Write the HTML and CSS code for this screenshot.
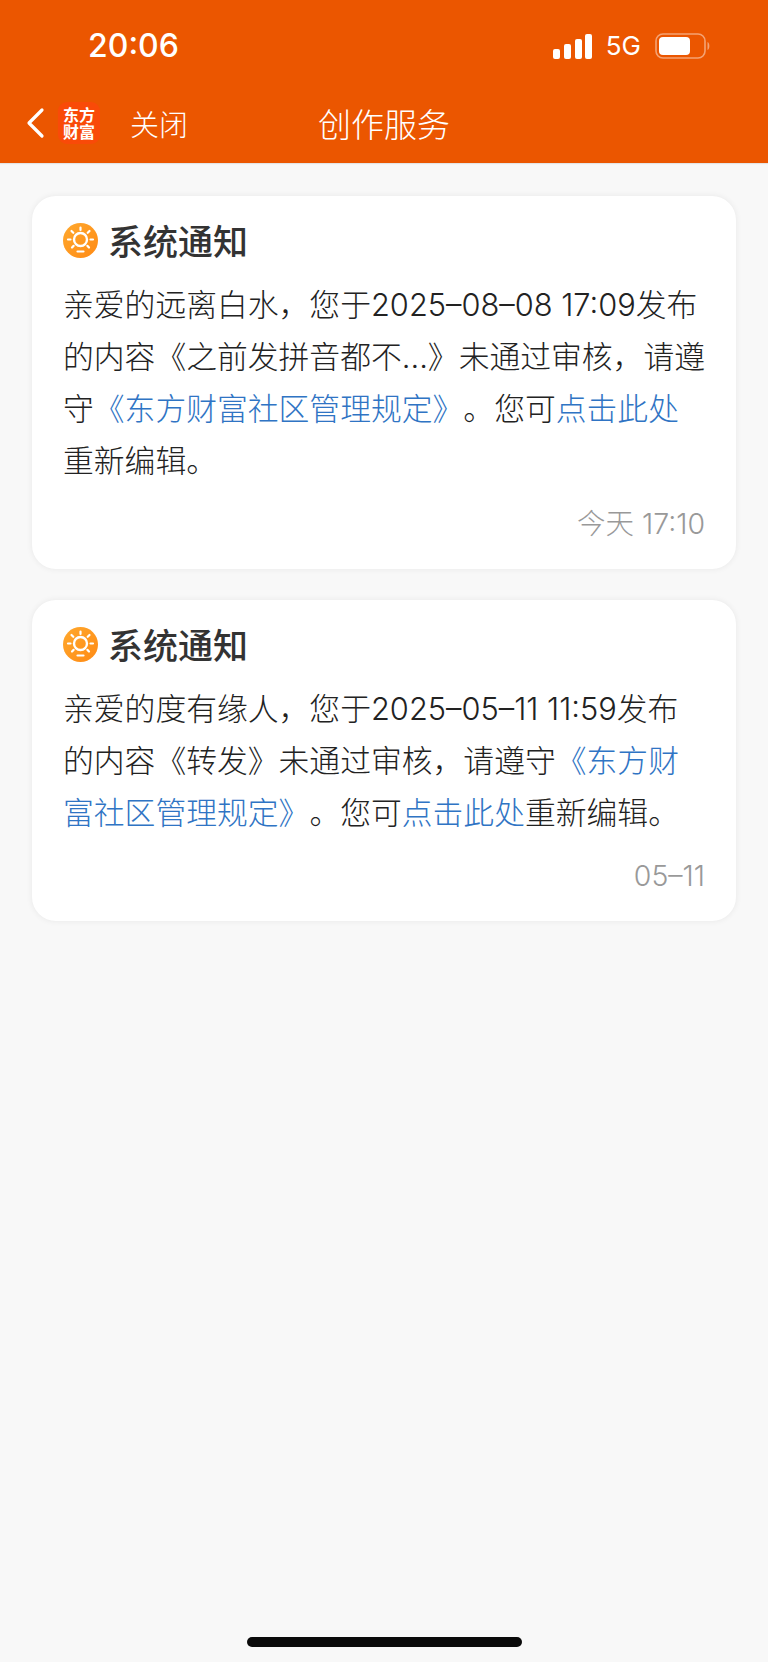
FILE: index.html
```html
<!DOCTYPE html>
<html lang="zh">
<head>
<meta charset="utf-8">
<title>创作服务</title>
<link rel="stylesheet" href="styles.css">
</head>
<body>
<header class="top">
  <div class="status">
    <span class="time">20:06</span>
    <div class="status-right">
      <svg class="signal" width="39" height="25" viewBox="0 0 39 25"><rect x="0" y="15" width="7" height="10" rx="2"/><rect x="11" y="10" width="7" height="15" rx="2"/><rect x="22" y="5" width="7" height="20" rx="2"/><rect x="32" y="0" width="7" height="25" rx="2"/></svg>
      <span class="net">5G</span>
      <svg class="battery" width="56" height="26" viewBox="0 0 56 26"><rect x="1" y="1" width="49" height="24" rx="7" fill="none" stroke="#fff" stroke-opacity=".45" stroke-width="1.6"/><rect x="4" y="4" width="31" height="18" rx="4" fill="#fff"/><path d="M52.500 9 C55 10 55 16 52.500 17 Z" fill="#fff" fill-opacity=".45"/></svg>
    </div>
  </div>
  <nav class="nav">
    <svg class="back" width="20" height="32" viewBox="0 0 20 32"><path d="M17 3 L4 16 L17 29" fill="none" stroke="#fff" stroke-width="3.200" stroke-linecap="round" stroke-linejoin="round"/></svg>
    <div class="logo"><span>东方</span><span>财富</span></div>
    <span class="close">关闭</span>
    <h1 class="title">创作服务</h1>
  </nav>
</header>
<main class="list">
  <article class="card">
    <h2 class="head">
      <svg class="sun" width="35" height="35" viewBox="0 0 35 35"><defs><linearGradient id="g1" x1="0" y1="0" x2="1" y2="1"><stop offset="0" stop-color="#ffa92e"/><stop offset="1" stop-color="#ff8a14"/></linearGradient></defs><circle cx="17.500" cy="17.500" r="17.500" fill="url(#g1)"/><circle cx="17.500" cy="16.500" r="6.500" fill="none" stroke="#fff" stroke-width="2.400"/><path d="M17.500 4.500v2.500M8.500 8l1.800 1.800M26.500 8l-1.800 1.800M5 16.500h2.500M27.500 16.500H30M9 24.500l1.600-1.600M26 24.500l-1.600-1.600M14.500 28.500h6" stroke="#fff" stroke-width="2.200" stroke-linecap="round" fill="none"/></svg>
      <span>系统通知</span>
    </h2>
    <p class="body">亲爱的远离白水，您于2025–08–08 17:09发布的内容《之前发拼音都不...》未通过审核，请遵守<a class="link">《东方财富社区管理规定》</a>。您可<a class="link">点击此处</a>重新编辑。</p>
    <div class="date">今天 17:10</div>
  </article>
  <article class="card">
    <h2 class="head">
      <svg class="sun" width="35" height="35" viewBox="0 0 35 35"><circle cx="17.500" cy="17.500" r="17.500" fill="url(#g1)"/><circle cx="17.500" cy="16.500" r="6.500" fill="none" stroke="#fff" stroke-width="2.400"/><path d="M17.500 4.500v2.500M8.500 8l1.800 1.800M26.500 8l-1.800 1.800M5 16.500h2.500M27.500 16.500H30M9 24.500l1.600-1.600M26 24.500l-1.600-1.600M14.500 28.500h6" stroke="#fff" stroke-width="2.200" stroke-linecap="round" fill="none"/></svg>
      <span>系统通知</span>
    </h2>
    <p class="body">亲爱的度有缘人，您于2025–05–11 11:59发布的内容《转发》未通过审核，请遵守<a class="link">《东方财富社区管理规定》</a>。您可<a class="link">点击此处</a>重新编辑。</p>
    <div class="date">05–11</div>
  </article>
</main>
<div class="home"></div>
</body>
</html>
```
FILE: styles.css
```css
* { box-sizing: border-box; }
html, body { margin: 0; padding: 0; }
body {
  width: 768px;
  height: 1662px;
  background: #f8f8f8;
  font-family: "Noto Sans CJK SC", "Liberation Sans", sans-serif;
  position: relative;
  overflow: hidden;
  text-spacing-trim: space-all;
}
.top { background: #eb5600; height: 163px; color: #fff; box-shadow: 0 1px 1px #e4e4e4; }
.status { height: 86px; display: flex; justify-content: space-between; align-items: flex-start; padding: 26px 57px 0 88px; }
.time { font: 500 32px/40px "Inter", "Liberation Sans", sans-serif; }
.status-right { display: flex; align-items: center; gap: 14px; padding-top: 7px; }
.signal { fill: #fff; flex: none; }
.net { font: 400 26px/26px "Inter", "Liberation Sans", sans-serif; }
.battery { flex: none; }
.nav { height: 74px; display: flex; align-items: center; padding-left: 25px; position: relative; }
.back { flex: none; }
.logo { width: 42px; height: 42px; margin-left: 13px; border-radius: 9px; background: #f94a08; display: flex; flex-direction: column; align-items: center; justify-content: center; font: 700 16px/17px "Noto Sans CJK SC", serif; }
.close { margin-left: 30px; font-size: 29px; line-height: 36px; font-weight: 300; }
.title { position: absolute; left: 0; right: 0; top: 17px; margin: 0; text-align: center; font-size: 33px; line-height: 40px; font-weight: 300; }
.list { display: flex; flex-direction: column; gap: 31px; padding: 33px 32px 0; }
.card { background: #fff; border-radius: 24px; box-shadow: 0 0 6px rgba(0,0,0,.07); padding: 22px 31px 25px 31px; }
.head { display: flex; align-items: center; gap: 10px; margin: 0 0 17px; font-size: 35px; line-height: 44px; font-weight: 500; color: #333; }
.sun { flex: none; }
.body { margin: 0; font: 300 30.800px/52px "Inter", "Noto Sans CJK SC", sans-serif; color: #222; }
.link { color: #2f74c4; }
.date { margin-top: 17px; text-align: right; font: 300 28.500px/40px "Inter", "Noto Sans CJK SC", sans-serif; color: #999; }
.home { position: absolute; left: 247px; top: 1637px; width: 275px; height: 10px; border-radius: 5px; background: #0a0a0a; }
```
